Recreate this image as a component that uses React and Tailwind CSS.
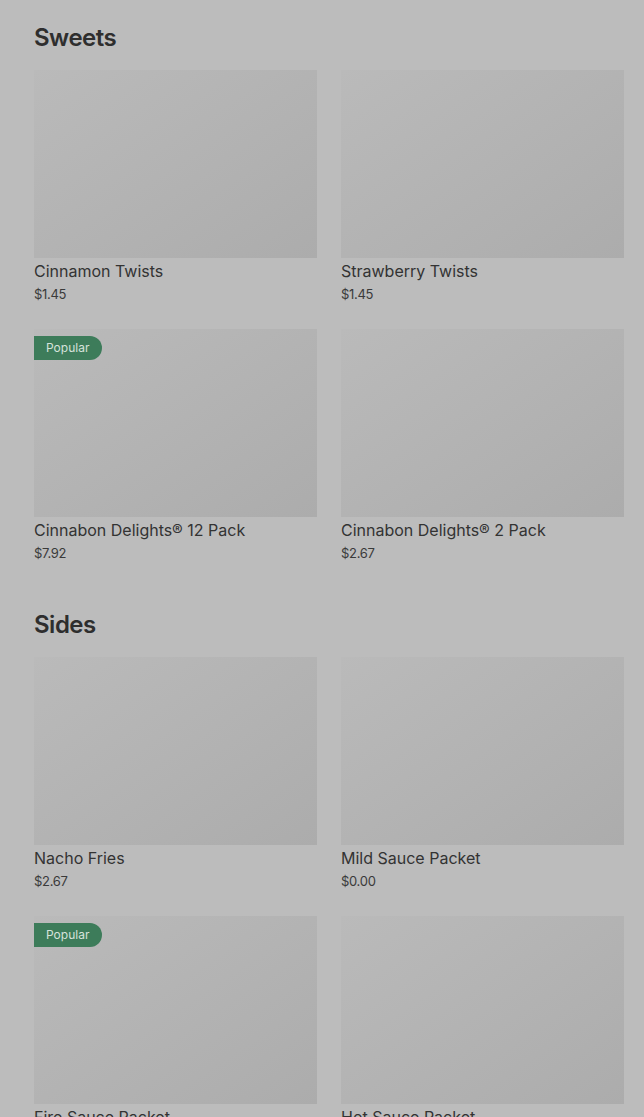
import React from "react";

const sections = [
  {
    title: "Sweets",
    items: [
      { name: "Cinnamon Twists", price: "$1.45" },
      { name: "Strawberry Twists", price: "$1.45" },
      { name: "Cinnabon Delights® 12 Pack", price: "$7.92", popular: true },
      { name: "Cinnabon Delights® 2 Pack", price: "$2.67" },
    ],
  },
  {
    title: "Sides",
    items: [
      { name: "Nacho Fries", price: "$2.67" },
      { name: "Mild Sauce Packet", price: "$0.00" },
      { name: "Fire Sauce Packet", price: "$0.00", popular: true },
      { name: "Hot Sauce Packet", price: "$0.00" },
    ],
  },
];

const ItemCard = ({ item }) => (
  <div className="flex flex-col">
    <div className="relative h-[188px] bg-gradient-to-br from-[#bababa] to-[#acacac]">
      {item.popular && (
        <span className="absolute left-0 top-[7px] h-6 pl-3 pr-[13px] flex items-center rounded-r-full bg-[#3d7c5a] text-[12px] text-[#d6e2db]">
          Popular
        </span>
      )}
    </div>
    <div className="mt-[1px] text-[16px] leading-6 text-[#333333]">{item.name}</div>
    <div className="mt-[1px] text-[13px] leading-5 text-[#3a3a3a] tracking-[-0.3px]">{item.price}</div>
  </div>
);

export default function App() {
  return (
    <div
      className="min-h-screen bg-[#bcbcbc] pl-[34px] pr-[20px] pt-[22px]"
      style={{ fontFamily: "Inter, 'Noto Sans', sans-serif" }}
    >
      {sections.map((section) => (
        <section key={section.title} className="mb-[46px]">
          <h2 className="text-[24px] leading-8 font-semibold text-[#2e2e2e] tracking-[-0.5px] mb-[16px]">
            {section.title}
          </h2>
          <div className="grid grid-cols-2 gap-x-6 gap-y-[25px]">
            {section.items.map((item) => (
              <ItemCard key={item.name} item={item} />
            ))}
          </div>
        </section>
      ))}
    </div>
  );
}
